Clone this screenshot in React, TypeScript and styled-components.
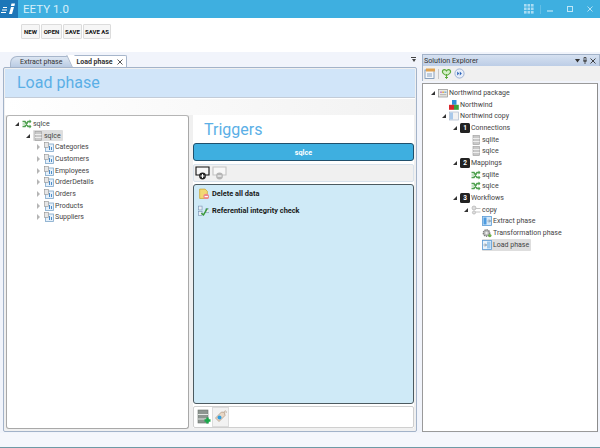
import { ReactNode } from "react"
import styled, { createGlobalStyle } from "styled-components"

const GlobalStyle = createGlobalStyle`
  html, body { margin: 0; padding: 0; background: #fff; }
  #root { width: 600px; height: 448px; overflow: hidden; }
  * { box-sizing: border-box; }
`

const FONT = `Roboto, "Noto Sans", sans-serif`
const BLUE = "#3eafe0"

const Window = styled.div`
  width: 600px;
  height: 448px;
  display: flex;
  flex-direction: column;
  font-family: ${FONT};
  color: #333;
  background: #fff;
`

const TitleBar = styled.div`
  height: 18px;
  flex: none;
  display: flex;
  align-items: center;
  background: ${BLUE};
  color: #d8f0fa;
  font-size: 11.5px;
`

const Logo = styled.div`
  width: 18px;
  height: 18px;
  background: #1d76b8;
  display: flex;
  align-items: center;
  justify-content: center;
  margin-right: 5px;
`

const TitleText = styled.div`
  flex: 1;
`

const WindowButtons = styled.div`
  display: flex;
  align-items: center;
  padding-right: 7px;
  gap: 14px;
`

const TitleDivider = styled.div`
  width: 1px;
  height: 9px;
  margin: 0 -8px 0 -8px;
  background: #62bee6;
`

const Toolbar = styled.div`
  height: 34px;
  flex: none;
  display: flex;
  align-items: flex-start;
  padding: 6px 0 0 21px;
  gap: 1px;
`

const ToolButton = styled.button`
  height: 15px;
  width: ${(p: { $w: number }) => p.$w}px;
  padding: 0;
  border: 1px solid #dcdcdc;
  border-radius: 1px;
  background: #f6f6f6;
  font-family: ${FONT};
  font-size: 6px;
  font-weight: 700;
  color: #111;
`

const Workspace = styled.div`
  flex: 1;
  min-height: 0;
  display: flex;
  background: #f1f4fb;
  padding: 0 0 0 2px;
  gap: 4px;
`

const LeftDock = styled.div`
  width: 416px;
  display: flex;
  flex-direction: column;
`

const TabStrip = styled.div`
  height: 15px;
  flex: none;
  display: flex;
  align-items: flex-end;
  padding-left: 8px;
  position: relative;
`

const Tab = styled.div<{ $active?: boolean }>`
  height: ${(p) => (p.$active ? 12 : 11)}px;
  display: flex;
  align-items: center;
  gap: 4px;
  font-size: 7px;
  position: relative;
  padding: 0 ${(p) => (p.$active ? 3 : 9)}px 0 ${(p) => (p.$active ? 4 : 9)}px;
  font-weight: ${(p) => (p.$active ? 700 : 400)};
  border: 1px solid #a7b6cb;
  border-left: ${(p) => (p.$active ? "none" : "1px solid #a7b6cb")};
  border-bottom: none;
  border-radius: ${(p) => (p.$active ? "0 2px 0 0" : "7px 2px 0 0")};
  background: ${(p) => (p.$active ? "#fff" : "linear-gradient(#dce6f2, #b9cbe3)")};
  color: #333;
  &::before {
    content: "";
    display: ${(p) => (p.$active ? "block" : "none")};
    position: absolute;
    left: -3px;
    top: -1px;
    bottom: 0;
    width: 7px;
    background: #fff;
    border-left: 1px solid #a7b6cb;
    transform: skewX(25deg);
  }
`

const TabLabel = styled.span`
  position: relative;
`

const DockMenu = styled.div`
  position: absolute;
  right: 2px;
  top: 5px;
  width: 5px;
  height: 6px;
  display: flex;
  flex-direction: column;
  align-items: center;
  gap: 1px;
  &::before {
    content: "";
    width: 5px;
    height: 1px;
    background: #444;
  }
  &::after {
    content: "";
    border-left: 2.5px solid transparent;
    border-right: 2.5px solid transparent;
    border-top: 3px solid #444;
  }
`

const Document = styled.div`
  flex: 1;
  min-height: 0;
  margin: 0 1px 1px 1px;
  border: 1px solid #a3b3c9;
  border-radius: 2px;
  background: #f0f0f0;
  padding: 1px;
  display: flex;
  flex-direction: column;
`

const PhaseHeader = styled.div`
  height: 29px;
  flex: none;
  background: #d1e5f9;
  border-bottom: 1px solid #c3ccd8;
  color: #5bafe6;
  font-size: 16px;
  line-height: 28px;
  padding-left: 12px;
`

const PhaseStrip = styled.div`
  height: 17px;
  flex: none;
  background: linear-gradient(90deg, #fff, #f2f2f2);
  border-top: 1px solid #fff;
`

const PhaseBody = styled.div`
  flex: 1;
  min-height: 0;
  display: flex;
  padding: 0 1px 2px 1px;
  gap: 4px;
`

const SourcePanel = styled.div`
  width: 183px;
  margin-bottom: -1px;
  background: #fff;
  border: 1px solid #a8a8a8;
  border-top-color: #b5b5b5;
  border-radius: 3px;
  padding-top: 2px;
`

const TriggersColumn = styled.div`
  flex: 1;
  display: flex;
  flex-direction: column;
  background: #fff;
`

const TriggersTitle = styled.div`
  height: 27px;
  flex: none;
  color: #5bafe6;
  font-size: 16px;
  line-height: 30px;
  padding-left: 11px;
`

const ConnectionBar = styled.div`
  height: 18px;
  flex: none;
  background: ${BLUE};
  border: 1px solid #20506c;
  border-radius: 3px;
  color: #fff;
  font-size: 7.2px;
  font-weight: 700;
  display: flex;
  align-items: center;
  justify-content: center;
  margin: 1px 0 3px;
`

const TriggerTools = styled.div`
  height: 18px;
  flex: none;
  border: 1px solid #d8e2ec;
  border-radius: 2px;
  background: #f0f0f0;
  display: flex;
  align-items: center;
  padding-left: 1px;
  gap: 2px;
`

const TriggerList = styled.div`
  flex: 1;
  margin-top: 2px;
  border: 1px solid #4c5a60;
  border-radius: 3px;
  background: #cfeaf7;
  padding-left: 4px;
`

const TriggerItem = styled.div`
  height: 17px;
  display: flex;
  align-items: center;
  gap: 3px;
  font-size: 7.4px;
  font-weight: 700;
  color: #1a1a1a;
`

const FooterTools = styled.div`
  height: 22px;
  flex: none;
  margin-top: 2px;
  background: #fff;
  border: 1px solid #cfcfcf;
  border-radius: 2px;
  display: flex;
  align-items: center;
  padding-left: 1px;
`

const FooterButton = styled.div<{ $selected?: boolean }>`
  width: 17px;
  height: 20px;
  display: flex;
  align-items: center;
  justify-content: center;
  background: ${(p) => (p.$selected ? "#f2f2f2" : "transparent")};
  border: 1px solid ${(p) => (p.$selected ? "#dcdcdc" : "transparent")};
`

const RightDock = styled.div`
  flex: 1;
  min-width: 0;
  padding: 2px 0 1px 0;
  display: flex;
  flex-direction: column;
`

const ExplorerTitle = styled.div`
  height: 12px;
  flex: none;
  background: linear-gradient(#d6e1f1, #bccde6);
  border: 1px solid #a3b3c9;
  border-bottom: none;
  font-size: 7.2px;
  color: #333;
  display: flex;
  align-items: center;
  justify-content: space-between;
  padding: 0 3px 0 1px;
`

const ExplorerGlyphs = styled.div`
  display: flex;
  align-items: center;
  gap: 3px;
`

const ExplorerTools = styled.div`
  height: 15px;
  flex: none;
  background: #f0f0f0;
  border-left: 1px solid #a3b3c9;
  display: flex;
  align-items: center;
  padding-left: 1px;
  gap: 2px;
`

const ToolDivider = styled.div`
  width: 1px;
  height: 10px;
  background: #c8c8c8;
`

const ExplorerBody = styled.div`
  flex: 1;
  min-height: 0;
  background: #fff;
  margin: 2px 2px 0 0;
  border: 1px solid #9a9a9a;
  border-right-color: #8c8c8c;
  padding-top: 3px;
`

const TreeRow = styled.div<{ $level: number; $offset: number }>`
  height: 11.7px;
  display: flex;
  align-items: center;
  padding-left: ${(p) => p.$offset + p.$level * 11}px;
  font-size: 7px;
  color: #444;
  white-space: nowrap;
`

const Arrow = styled.span<{ $kind?: "open" | "closed" }>`
  width: 11px;
  height: 11px;
  flex: none;
  display: flex;
  align-items: center;
  justify-content: center;
  &::before {
    content: "";
    display: ${(p) => (p.$kind ? "block" : "none")};
    ${(p) =>
      p.$kind === "open"
        ? `border-left: 4px solid transparent; border-bottom: 4px solid #333;`
        : `border-top: 3px solid transparent; border-bottom: 3px solid transparent; border-left: 3.5px solid #b5b5b5;`}
  }
`

const RowContent = styled.span<{ $selected?: boolean }>`
  display: flex;
  align-items: center;
  gap: 1px;
  height: 11.7px;
  padding-right: ${(p) => (p.$selected ? 2 : 0)}px;
  background: ${(p) => (p.$selected ? "#dedede" : "transparent")};
  border-radius: 1px;
`

const StatusBar = styled.div`
  height: 15px;
  flex: none;
  background: #f5f7fc;
  border-bottom: 1px solid #6f9aa6;
`

const Svg = ({ size = 10, children }: { size?: number; children: ReactNode }) => (
  <svg width={size} height={size} viewBox="0 0 10 10" style={{ flex: "none" }}>
    {children}
  </svg>
)

const MappingIcon = () => (
  <Svg>
    <path d="M0.5 2.5h2.5l3 5h3M0.5 7.5h2.5l3-5h3" fill="none" stroke="#4fa04f" strokeWidth="1.6" />
    <path d="M7.5 0.5l2 2-2 2zM7.5 5.5l2 2-2 2z" fill="#4fa04f" />
    <path d="M0.5 5h3" stroke="#8cc48c" strokeWidth="1" />
  </Svg>
)

const DbIcon = () => (
  <Svg>
    <rect x="2" y="0.5" width="6.5" height="9" fill="#c9c9c9" stroke="#9a9a9a" strokeWidth="0.6" />
    <path d="M2 3.5h6.5M2 6.5h6.5" stroke="#f2f2f2" strokeWidth="0.9" />
  </Svg>
)

const TableIcon = () => (
  <Svg>
    <rect x="1.5" y="2" width="8" height="7.5" fill="#e5f0fa" stroke="#7ea6c9" strokeWidth="0.8" />
    <rect x="0.5" y="0.5" width="4" height="5" fill="#e6e6e6" stroke="#8f8f8f" strokeWidth="0.6" />
    <path d="M5.5 4v4M7.5 5v3" stroke="#4d8cc7" strokeWidth="1" />
  </Svg>
)

const PackageIcon = () => (
  <Svg>
    <rect x="0.5" y="1.5" width="9" height="7.5" fill="#e9e9e3" stroke="#8d8d8d" strokeWidth="0.7" />
    <rect x="2" y="3.5" width="2" height="1.5" fill="#c98ac9" />
    <rect x="4.2" y="3.5" width="2" height="1.5" fill="#e0b050" />
    <rect x="6.4" y="3.5" width="2" height="1.5" fill="#7fb0d8" />
    <rect x="2" y="6" width="6.4" height="1.2" fill="#b9b9b9" />
  </Svg>
)

const CubesIcon = () => (
  <Svg>
    <rect x="3" y="0" width="4.5" height="4.8" fill="#2f8fd8" />
    <rect x="0" y="4.8" width="5" height="5" fill="#d9262c" />
    <rect x="5" y="4.8" width="4.8" height="5" fill="#3ca33c" />
  </Svg>
)

const CopyIcon = () => (
  <Svg>
    <rect x="0.5" y="1" width="9" height="8" fill="#f2f2f2" stroke="#a8b8cc" strokeWidth="0.7" />
    <rect x="1" y="1.5" width="3" height="7" fill="#a9c9ea" />
  </Svg>
)

const Badge = styled.span`
  width: 10px;
  height: 10px;
  flex: none;
  background: #222;
  border-radius: 1.5px;
  color: #fff;
  font-size: 6.5px;
  font-weight: 700;
  display: flex;
  align-items: center;
  justify-content: center;
`

const WorkflowIcon = () => (
  <Svg>
    <circle cx="3" cy="3" r="2" fill="#dedede" stroke="#a8a8a8" strokeWidth="0.6" />
    <circle cx="3" cy="7.5" r="1.6" fill="#dedede" stroke="#a8a8a8" strokeWidth="0.6" />
    <path d="M4.5 3.5h5M4.5 7h5" stroke="#bdbdbd" strokeWidth="0.9" />
  </Svg>
)

const ExtractIcon = () => (
  <Svg>
    <rect x="0.5" y="0.5" width="9" height="9" fill="#d4e8f9" stroke="#5a9bd5" strokeWidth="0.8" />
    <rect x="1.5" y="1.5" width="3" height="7" fill="#4d9be0" />
    <path d="M5.5 5h3M7 3.5l1.5 1.5L7 6.5" fill="none" stroke="#7a8a99" strokeWidth="0.8" />
  </Svg>
)

const GearIcon = () => (
  <Svg>
    <circle cx="4.5" cy="5" r="3.2" fill="#b9b9b9" stroke="#7f7f7f" strokeWidth="1.4" strokeDasharray="1.3 0.8" />
    <circle cx="4.5" cy="5" r="1.2" fill="#efefef" />
    <circle cx="7.8" cy="7.6" r="1.7" fill="#6fae4a" />
  </Svg>
)

const LoadIcon = () => (
  <Svg>
    <rect x="0.5" y="0.5" width="9" height="9" fill="#e9f3fb" stroke="#5a9bd5" strokeWidth="0.8" />
    <rect x="5" y="1.5" width="3.5" height="7" fill="#9cc8ec" />
    <path d="M1.5 5h3M3 3.5l1.5 1.5L3 6.5" fill="none" stroke="#7a8a99" strokeWidth="0.8" />
  </Svg>
)

const DeleteIcon = () => (
  <Svg size={11}>
    <path d="M1.5 1h5l2 2v6.5h-7z" fill="#f2d873" stroke="#c9a63a" strokeWidth="0.7" />
    <circle cx="7.5" cy="7.8" r="2.6" fill="#ee8a8a" />
    <path d="M6 7.8h3" stroke="#fff" strokeWidth="1" />
  </Svg>
)

const IntegrityIcon = () => (
  <Svg size={11}>
    <rect x="0.5" y="1" width="3.2" height="3.5" fill="#e8eef5" stroke="#7d97b5" strokeWidth="0.6" />
    <rect x="0.5" y="6" width="3.2" height="3.5" fill="#e8eef5" stroke="#7d97b5" strokeWidth="0.6" />
    <rect x="7" y="3.5" width="3.2" height="3.5" fill="#e8eef5" stroke="#7d97b5" strokeWidth="0.6" />
    <path d="M3 7.5l2 1.5L8.5 3" fill="none" stroke="#3a9a3a" strokeWidth="1.3" />
  </Svg>
)

const AddMonitor = ({ muted }: { muted?: boolean }) => (
  <svg width="15" height="14" viewBox="0 0 15 14" style={{ flex: "none" }}>
    <path d="M5 9H1V1h13v8h-4" fill="#f7f7f7" stroke={muted ? "#c4c4c4" : "#111"} strokeWidth="1.1" />
    <circle cx="7.5" cy="10" r="3.4" fill={muted ? "#b5b5b5" : "#222"} />
    <path d={muted ? "M5.5 10h4" : "M5.5 10h4M7.5 8v4"} stroke="#fff" strokeWidth="1.1" />
  </svg>
)

const ServerAddIcon = () => (
  <svg width="14" height="16" viewBox="0 0 14 16">
    <rect x="1" y="1" width="10" height="13" fill="#8e9691" stroke="#6c736f" strokeWidth="0.6" />
    <path d="M1 5.5h10M1 10h10" stroke="#e4e7e4" strokeWidth="1" />
    <path d="M10.5 8.5v6M7.5 11.5h6" stroke="#19a84a" strokeWidth="2.4" />
  </svg>
)

const TagIcon = () => (
  <svg width="14" height="16" viewBox="0 0 14 16">
    <path d="M1.5 9l6-6 3 .5.5 3-6 6z" fill="#e8d6c4" stroke="#b39c86" strokeWidth="0.8" />
    <circle cx="5.5" cy="8.5" r="2" fill="#2f9fe0" />
    <path d="M10 3c1-2 3-1 2 1" fill="none" stroke="#b39c86" strokeWidth="0.8" />
  </svg>
)

const PropertiesIcon = () => (
  <svg width="12" height="11" viewBox="0 0 12 11">
    <rect x="1" y="2" width="9" height="8.5" fill="#f4f7fb" stroke="#6e8db0" strokeWidth="0.8" />
    <rect x="2" y="0.5" width="9" height="3" fill="#e0a352" />
    <path d="M3 6h5M3 8h5" stroke="#6e8db0" strokeWidth="0.8" />
  </svg>
)

const RefreshIcon = () => (
  <svg width="11" height="11" viewBox="0 0 11 11">
    <path d="M5.5 7.5C3 6.5 1 5 1.5 3 2 1.2 4.5 1 5.5 2.8 6.5 1 9 1.2 9.5 3 10 5 8 6.5 5.5 7.5z" fill="#d5efc8" stroke="#5aa83a" strokeWidth="1.2" />
    <path d="M5.5 6v4.5M4 9l1.5 1.5L7 9" fill="none" stroke="#5aa83a" strokeWidth="1" />
  </svg>
)

const RunIcon = () => (
  <svg width="11" height="11" viewBox="0 0 11 11">
    <circle cx="5.5" cy="5.5" r="4.6" fill="#e8eef8" stroke="#8ba3cc" strokeWidth="0.8" />
    <path d="M3.2 3.5l2 2-2 2zM5.8 3.5l2 2-2 2z" fill="#2a62b8" />
  </svg>
)

const LogoMark = () => (
  <svg width="16" height="14" viewBox="0 0 16 14">
    <path d="M1 8h5M0 10.5h5M2 5.5h4" stroke="#fff" strokeWidth="1" />
    <path d="M8 12l2-7h3l-2 7zM10.5 1.5h3.5l-.6 2.5h-3.5z" fill="#fff" />
  </svg>
)

const AppsIcon = () => (
  <svg width="10" height="10" viewBox="0 0 10 10">
    {[0, 3.5, 7].flatMap((x) =>
      [0, 3.5, 7].map((y) => <rect key={`${x}-${y}`} x={x} y={y} width="2.6" height="2.6" fill="#a9dcf3" />)
    )}
  </svg>
)

const MinimizeIcon = () => (
  <svg width="6" height="6" viewBox="0 0 6 6"><path d="M0 5h6" stroke="#bfe6f7" strokeWidth="1.2" /></svg>
)

const MaximizeIcon = () => (
  <svg width="6" height="6" viewBox="0 0 6 6"><rect x="0.5" y="0.5" width="5" height="5" fill="none" stroke="#bfe6f7" strokeWidth="1" /></svg>
)

const CloseIcon = ({ color = "#bfe6f7", size = 6 }: { color?: string; size?: number }) => (
  <svg width={size} height={size} viewBox="0 0 6 6"><path d="M0.5 0.5l5 5M5.5 0.5l-5 5" stroke={color} strokeWidth="0.9" /></svg>
)

interface INode {
  level: number
  arrow?: "open" | "closed"
  icon: ReactNode
  label: string
  selected?: boolean
}

const sourceTree: INode[] = [
  { level: 0, arrow: "open", icon: <MappingIcon />, label: "sqlce" },
  { level: 1, arrow: "open", icon: <DbIcon />, label: "sqlce", selected: true },
  ...["Categories", "Customers", "Employees", "OrderDetails", "Orders", "Products", "Suppliers"].map((label) => ({
    level: 2,
    arrow: "closed" as const,
    icon: <TableIcon />,
    label,
  })),
]

const solutionTree: INode[] = [
  { level: 0, arrow: "open", icon: <PackageIcon />, label: "Northwind package" },
  { level: 1, icon: <CubesIcon />, label: "Northwind" },
  { level: 1, arrow: "open", icon: <CopyIcon />, label: "Northwind copy" },
  { level: 2, arrow: "open", icon: <Badge>1</Badge>, label: "Connections" },
  { level: 3, icon: <DbIcon />, label: "sqlite" },
  { level: 3, icon: <DbIcon />, label: "sqlce" },
  { level: 2, arrow: "open", icon: <Badge>2</Badge>, label: "Mappings" },
  { level: 3, icon: <MappingIcon />, label: "sqlite" },
  { level: 3, icon: <MappingIcon />, label: "sqlce" },
  { level: 2, arrow: "open", icon: <Badge>3</Badge>, label: "Workflows" },
  { level: 3, arrow: "open", icon: <WorkflowIcon />, label: "copy" },
  { level: 4, icon: <ExtractIcon />, label: "Extract phase" },
  { level: 4, icon: <GearIcon />, label: "Transformation phase" },
  { level: 4, icon: <LoadIcon />, label: "Load phase", selected: true },
]

function Tree({ nodes, offset }: { nodes: INode[]; offset: number }) {
  return (
    <>
      {nodes.map((node, i) => (
        <TreeRow key={i} $level={node.level} $offset={offset}>
          <Arrow $kind={node.arrow} />
          <RowContent $selected={node.selected}>
            {node.icon}
            {node.label}
          </RowContent>
        </TreeRow>
      ))}
    </>
  )
}

export default function App() {
  return (
    <Window>
      <GlobalStyle />
      <TitleBar>
        <Logo><LogoMark /></Logo>
        <TitleText>EETY 1.0</TitleText>
        <WindowButtons>
          <AppsIcon />
          <TitleDivider />
          <MinimizeIcon />
          <MaximizeIcon />
          <CloseIcon />
        </WindowButtons>
      </TitleBar>
      <Toolbar>
        <ToolButton $w={19}>NEW</ToolButton>
        <ToolButton $w={21}>OPEN</ToolButton>
        <ToolButton $w={19}>SAVE</ToolButton>
        <ToolButton $w={28}>SAVE AS</ToolButton>
      </Toolbar>
      <Workspace>
        <LeftDock>
          <TabStrip>
            <Tab>Extract phase</Tab>
            <Tab $active>
              <TabLabel>Load phase</TabLabel>
              <CloseIcon color="#444" />
            </Tab>
            <DockMenu />
          </TabStrip>
          <Document>
            <PhaseHeader>Load phase</PhaseHeader>
            <PhaseStrip />
            <PhaseBody>
              <SourcePanel>
                <Tree nodes={sourceTree} offset={4} />
              </SourcePanel>
              <TriggersColumn>
                <TriggersTitle>Triggers</TriggersTitle>
                <ConnectionBar>sqlce</ConnectionBar>
                <TriggerTools>
                  <AddMonitor />
                  <AddMonitor muted />
                </TriggerTools>
                <TriggerList>
                  <TriggerItem><DeleteIcon />Delete all data</TriggerItem>
                  <TriggerItem><IntegrityIcon />Referential integrity check</TriggerItem>
                </TriggerList>
                <FooterTools>
                  <FooterButton><ServerAddIcon /></FooterButton>
                  <FooterButton $selected><TagIcon /></FooterButton>
                </FooterTools>
              </TriggersColumn>
            </PhaseBody>
          </Document>
        </LeftDock>
        <RightDock>
          <ExplorerTitle>
            Solution Explorer
            <ExplorerGlyphs>
              <svg width="5" height="4" viewBox="0 0 5 4"><path d="M0 0h5L2.5 3.5z" fill="#333" /></svg>
              <svg width="4" height="7" viewBox="0 0 4 7"><path d="M1 .5h2v3.5H1zM2 4v3M0 4h4" fill="none" stroke="#333" strokeWidth="0.8" /></svg>
              <CloseIcon color="#333" />
            </ExplorerGlyphs>
          </ExplorerTitle>
          <ExplorerTools>
            <PropertiesIcon />
            <ToolDivider />
            <RefreshIcon />
            <RunIcon />
          </ExplorerTools>
          <ExplorerBody>
            <Tree nodes={solutionTree} offset={4} />
          </ExplorerBody>
        </RightDock>
      </Workspace>
      <StatusBar />
    </Window>
  )
}
